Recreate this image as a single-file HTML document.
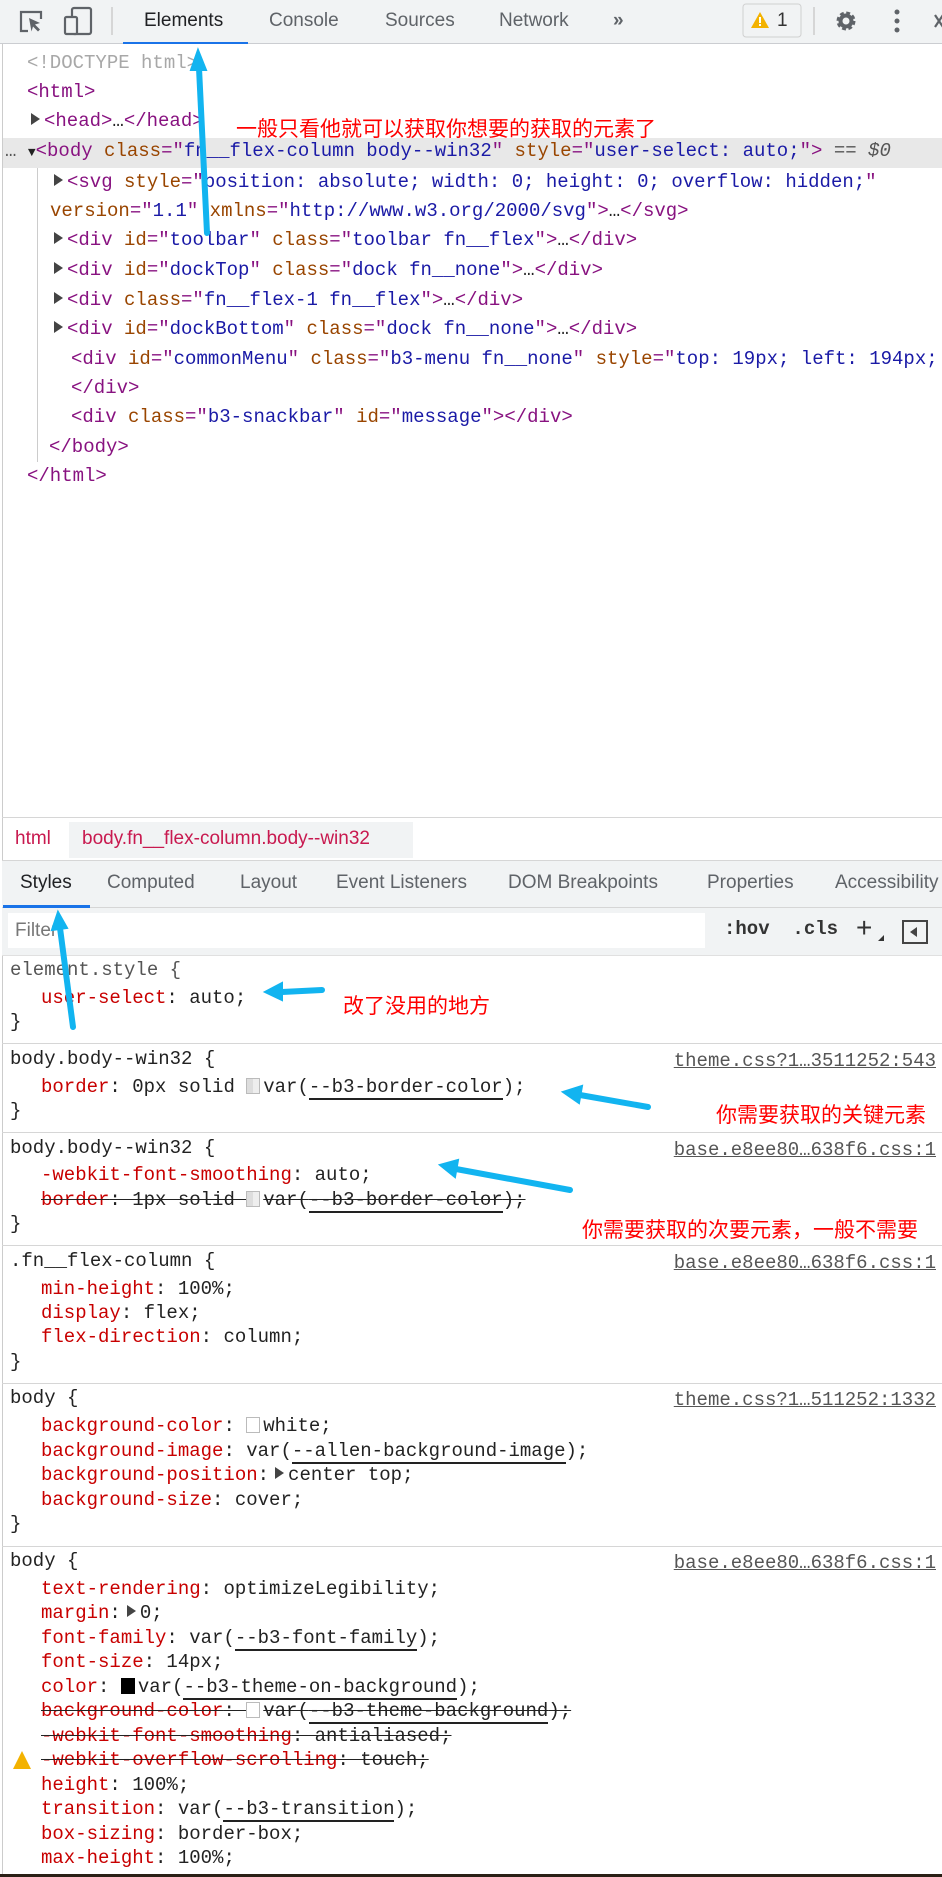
<!DOCTYPE html>
<html><head><meta charset="utf-8"><style>
*{margin:0;padding:0;box-sizing:border-box}
body{width:942px;height:1877px;position:relative;background:#fff;overflow:hidden;font-family:"Liberation Sans",sans-serif}
.l{position:absolute;height:26px;line-height:26px;white-space:pre;font:19px "Liberation Mono",monospace;color:#222}
.t{color:#881280}.a{color:#994500}.v{color:#1a1aa6}.g{color:#a8a8a8}
.p{color:#c80000}.u{border-bottom:2px solid #222}
.s{text-decoration:line-through;text-decoration-color:#222}
.lk{position:absolute;right:6px;font:19px "Liberation Mono",monospace;color:#555;text-decoration:underline;height:26px;line-height:26px}
.sw{display:inline-block;width:14px;height:16px;border:1px solid #bbb;vertical-align:-2px;margin-right:3px;background:linear-gradient(90deg,#ddd 50%,#eee 50%)}
.tri{display:inline-block;width:0;height:0;border-left:9px solid #444;border-top:6px solid transparent;border-bottom:6px solid transparent;margin-right:4px;vertical-align:1px}
.sep{position:absolute;left:2px;right:0;height:1px;background:#d6d6d6}
.cn{position:absolute;color:#f00;font:21px "Liberation Sans","Noto Sans CJK SC",sans-serif;white-space:nowrap}
.tab{position:absolute;top:10px;font-size:19px;color:#5f6368}
.st{position:absolute;top:872px;font-size:19px;color:#5f6368}
</style></head><body>
<div style="position:absolute;left:0;top:0;width:942px;height:44px;background:#f1f3f4;border-bottom:1px solid #cbcdd1"></div>
<svg style="position:absolute;left:0;top:0" width="942" height="44">
<path d="M28 31h-7V12h20v7" fill="none" stroke="#5f6368" stroke-width="2.2"/>
<path d="M29 18l11 5-5 1.5 5 5-2 2-5-5-1.5 5z" fill="#5f6368"/>
<rect x="72" y="8" width="19" height="26" rx="2" fill="none" stroke="#5f6368" stroke-width="2.2"/>
<rect x="65" y="17" width="12" height="17" rx="1.5" fill="#f1f3f4" stroke="#5f6368" stroke-width="2.2"/>
<line x1="112" y1="7" x2="112" y2="35" stroke="#ccc" stroke-width="1.5"/>
<rect x="123" y="42" width="125" height="3" fill="#1a73e8"/>
<rect x="743" y="4" width="58" height="33" rx="3" fill="#f1f3f4" stroke="#d0d0d0"/>
<path d="M760 12l-9 16h18z" fill="#f3b200"/><rect x="759" y="17" width="2" height="6" fill="#fff"/><rect x="759" y="24" width="2" height="2" fill="#fff"/>
<line x1="814" y1="7" x2="814" y2="35" stroke="#ccc" stroke-width="1.5"/>
<circle cx="846" cy="21" r="7" fill="none" stroke="#5f6368" stroke-width="5" stroke-dasharray="3.3 2.2"/>
<circle cx="846" cy="21" r="5.5" fill="none" stroke="#5f6368" stroke-width="4"/>
<circle cx="897" cy="12" r="2.5" fill="#5f6368"/><circle cx="897" cy="21" r="2.5" fill="#5f6368"/><circle cx="897" cy="30" r="2.5" fill="#5f6368"/>
<path d="M935 15l8 12M943 15l-8 12" stroke="#5f6368" stroke-width="2.2"/>
</svg>
<div class="tab" style="left:144px;color:#202124">Elements</div>
<div class="tab" style="left:269px">Console</div>
<div class="tab" style="left:385px">Sources</div>
<div class="tab" style="left:499px">Network</div>
<div class="tab" style="left:613px;font-weight:bold">»</div>
<div class="tab" style="left:777px;color:#333">1</div>
<div style="position:absolute;left:2px;top:44px;width:1px;height:1833px;background:#ccc"></div>

<div style="position:absolute;left:3px;top:138px;width:939px;height:30px;background:#e8e8e8"></div>
<div style="position:absolute;left:37px;top:168px;width:1px;height:294px;background:#ccc"></div>
<div class="l g" style="left:27px;top:52px">&lt;!DOCTYPE html&gt;</div>
<div class="l t" style="left:27px;top:81px">&lt;html&gt;</div>
<div class="l" style="left:31px;top:110px"><span class="tri"></span><span class="t">&lt;head&gt;</span>…<span class="t">&lt;/head&gt;</span></div>
<div class="l" style="left:5px;top:140px"><span style="color:#555">…</span> <span style="font-size:13px">▼</span><span class="t">&lt;body</span> <span class="a">class</span><span class="t">="</span><span class="v">fn__flex-column body--win32</span><span class="t">"</span> <span class="a">style</span><span class="t">="</span><span class="v">user-select: auto;</span><span class="t">"&gt;</span> <span style="color:#555">== <i>$0</i></span></div>
<div class="l" style="left:54px;top:171px"><span class="tri"></span><span class="t">&lt;svg</span> <span class="a">style</span><span class="t">="</span><span class="v">position: absolute; width: 0; height: 0; overflow: hidden;</span><span class="t">"</span></div>
<div class="l" style="left:50px;top:200px"><span class="a">version</span><span class="t">="</span><span class="v">1.1</span><span class="t">"</span> <span class="a">xmlns</span><span class="t">="</span><span class="v">http://www.w3.org/2000/svg</span><span class="t">"&gt;</span>…<span class="t">&lt;/svg&gt;</span></div>
<div class="l" style="left:54px;top:229px"><span class="tri"></span><span class="t">&lt;div</span> <span class="a">id</span><span class="t">="</span><span class="v">toolbar</span><span class="t">"</span> <span class="a">class</span><span class="t">="</span><span class="v">toolbar fn__flex</span><span class="t">"&gt;</span>…<span class="t">&lt;/div&gt;</span></div>
<div class="l" style="left:54px;top:259px"><span class="tri"></span><span class="t">&lt;div</span> <span class="a">id</span><span class="t">="</span><span class="v">dockTop</span><span class="t">"</span> <span class="a">class</span><span class="t">="</span><span class="v">dock fn__none</span><span class="t">"&gt;</span>…<span class="t">&lt;/div&gt;</span></div>
<div class="l" style="left:54px;top:289px"><span class="tri"></span><span class="t">&lt;div</span> <span class="a">class</span><span class="t">="</span><span class="v">fn__flex-1 fn__flex</span><span class="t">"&gt;</span>…<span class="t">&lt;/div&gt;</span></div>
<div class="l" style="left:54px;top:318px"><span class="tri"></span><span class="t">&lt;div</span> <span class="a">id</span><span class="t">="</span><span class="v">dockBottom</span><span class="t">"</span> <span class="a">class</span><span class="t">="</span><span class="v">dock fn__none</span><span class="t">"&gt;</span>…<span class="t">&lt;/div&gt;</span></div>
<div class="l" style="left:71px;top:348px"><span class="t">&lt;div</span> <span class="a">id</span><span class="t">="</span><span class="v">commonMenu</span><span class="t">"</span> <span class="a">class</span><span class="t">="</span><span class="v">b3-menu fn__none</span><span class="t">"</span> <span class="a">style</span><span class="t">="</span><span class="v">top: 19px; left: 194px;</span></div>
<div class="l t" style="left:71px;top:377px">&lt;/div&gt;</div>
<div class="l" style="left:71px;top:406px"><span class="t">&lt;div</span> <span class="a">class</span><span class="t">="</span><span class="v">b3-snackbar</span><span class="t">"</span> <span class="a">id</span><span class="t">="</span><span class="v">message</span><span class="t">"&gt;&lt;/div&gt;</span></div>
<div class="l t" style="left:49px;top:436px">&lt;/body&gt;</div>
<div class="l t" style="left:27px;top:465px">&lt;/html&gt;</div>
<div class="cn" style="left:236px;top:113px">一般只看他就可以获取你想要的获取的元素了</div>

<div class="sep" style="top:817px"></div>
<div style="position:absolute;left:69px;top:822px;width:344px;height:36px;background:#f1f3f4"></div>
<div style="position:absolute;left:15px;top:828px;font-size:19px;color:#c8194f">html</div>
<div style="position:absolute;left:82px;top:828px;font-size:19px;color:#c8194f">body.fn__flex-column.body--win32</div>
<div style="position:absolute;left:2px;top:860px;width:940px;height:95px;background:#f1f3f4;border-top:1px solid #d6d6d6"></div>
<div style="position:absolute;left:2px;top:907px;width:940px;height:1px;background:#d6d6d6"></div>
<div class="st" style="left:20px;color:#202124">Styles</div>
<div class="st" style="left:107px">Computed</div>
<div class="st" style="left:240px">Layout</div>
<div class="st" style="left:336px">Event Listeners</div>
<div class="st" style="left:508px">DOM Breakpoints</div>
<div class="st" style="left:707px">Properties</div>
<div class="st" style="left:835px">Accessibility</div>
<div style="position:absolute;left:3px;top:905px;width:87px;height:3px;background:#1a73e8"></div>
<div style="position:absolute;left:8px;top:913px;width:697px;height:35px;background:#fff"></div>
<div style="position:absolute;left:15px;top:920px;font-size:19px;color:#777">Filter</div>
<div class="l" style="left:724px;top:918px;font-weight:bold;color:#333">:hov  .cls</div>
<div style="position:absolute;left:856px;top:912px;font-size:28px;color:#333">+</div>
<div style="position:absolute;left:878px;top:935px;border-left:6px solid transparent;border-bottom:6px solid #333"></div>
<div style="position:absolute;left:902px;top:920px;width:26px;height:24px;border:2px solid #444"><div style="position:absolute;left:6px;top:5px;border-right:7px solid #444;border-top:5px solid transparent;border-bottom:5px solid transparent"></div></div>
<div style="position:absolute;left:2px;top:955px;width:940px;height:1px;background:#e0e0e0"></div>

<div class="l" style="left:10px;top:959px;color:#555">element.style {</div>
<div class="l" style="left:41px;top:987px"><span class="p">user-select</span>: auto;</div>
<div class="l" style="left:10px;top:1011px">}</div>
<div class="cn" style="left:343px;top:990px">改了没用的地方</div>
<div class="sep" style="top:1043px"></div>

<div class="l" style="left:10px;top:1048px">body.body--win32 {</div><div class="lk" style="top:1048px">theme.css?1…3511252:543</div>
<div class="l" style="left:41px;top:1076px"><span class="p">border</span>: 0px solid <span class="sw"></span>var(<span class="u">--b3-border-color</span>);</div>
<div class="l" style="left:10px;top:1100px">}</div>
<div class="cn" style="left:716px;top:1099px">你需要获取的关键元素</div>
<div class="sep" style="top:1132px"></div>

<div class="l" style="left:10px;top:1137px">body.body--win32 {</div><div class="lk" style="top:1137px">base.e8ee80…638f6.css:1</div>
<div class="l" style="left:41px;top:1164px"><span class="p">-webkit-font-smoothing</span>: auto;</div>
<div class="l s" style="left:41px;top:1189px"><span class="p">border</span>: 1px solid <span class="sw"></span>var(<span class="u">--b3-border-color</span>);</div>
<div class="l" style="left:10px;top:1213px">}</div>
<div class="cn" style="left:582px;top:1214px">你需要获取的次要元素，一般不需要</div>
<div class="sep" style="top:1245px"></div>

<div class="l" style="left:10px;top:1250px">.fn__flex-column {</div><div class="lk" style="top:1250px">base.e8ee80…638f6.css:1</div>
<div class="l" style="left:41px;top:1278px"><span class="p">min-height</span>: 100%;</div>
<div class="l" style="left:41px;top:1302px"><span class="p">display</span>: flex;</div>
<div class="l" style="left:41px;top:1326px"><span class="p">flex-direction</span>: column;</div>
<div class="l" style="left:10px;top:1351px">}</div>
<div class="sep" style="top:1383px"></div>

<div class="l" style="left:10px;top:1387px">body {</div><div class="lk" style="top:1387px">theme.css?1…511252:1332</div>
<div class="l" style="left:41px;top:1415px"><span class="p">background-color</span>: <span class="sw" style="background:#fff"></span>white;</div>
<div class="l" style="left:41px;top:1440px"><span class="p">background-image</span>: var(<span class="u">--allen-background-image</span>);</div>
<div class="l" style="left:41px;top:1464px"><span class="p">background-position</span>:<span class="tri" style="margin-left:6px"></span>center top;</div>
<div class="l" style="left:41px;top:1489px"><span class="p">background-size</span>: cover;</div>
<div class="l" style="left:10px;top:1513px">}</div>
<div class="sep" style="top:1546px"></div>

<div class="l" style="left:10px;top:1550px">body {</div><div class="lk" style="top:1550px">base.e8ee80…638f6.css:1</div>
<div class="l" style="left:41px;top:1578px"><span class="p">text-rendering</span>: optimizeLegibility;</div>
<div class="l" style="left:41px;top:1602px"><span class="p">margin</span>:<span class="tri" style="margin-left:6px"></span>0;</div>
<div class="l" style="left:41px;top:1627px"><span class="p">font-family</span>: var(<span class="u">--b3-font-family</span>);</div>
<div class="l" style="left:41px;top:1651px"><span class="p">font-size</span>: 14px;</div>
<div class="l" style="left:41px;top:1676px"><span class="p">color</span>: <span class="sw" style="background:#000;border-color:#000"></span>var(<span class="u">--b3-theme-on-background</span>);</div>
<div class="l s" style="left:41px;top:1700px"><span class="p">background-color</span>: <span class="sw" style="background:#fff"></span>var(<span class="u">--b3-theme-background</span>);</div>
<div class="l s" style="left:41px;top:1725px"><span class="p">-webkit-font-smoothing</span>: antialiased;</div>
<div style="position:absolute;left:13px;top:1751px;border-left:9px solid transparent;border-right:9px solid transparent;border-bottom:18px solid #f3b200"></div>
<div class="l s" style="left:41px;top:1749px"><span class="p">-webkit-overflow-scrolling</span>: touch;</div>
<div class="l" style="left:41px;top:1774px"><span class="p">height</span>: 100%;</div>
<div class="l" style="left:41px;top:1798px"><span class="p">transition</span>: var(<span class="u">--b3-transition</span>);</div>
<div class="l" style="left:41px;top:1823px"><span class="p">box-sizing</span>: border-box;</div>
<div class="l" style="left:41px;top:1847px"><span class="p">max-height</span>: 100%;</div>
<div style="position:absolute;left:0;top:1874px;width:942px;height:3px;background:#2a2016"></div>

<svg style="position:absolute;left:0;top:0" width="942" height="1877">
<g stroke="#12b4f0" stroke-width="6" stroke-linecap="round" fill="#12b4f0">
<line x1="207" y1="233" x2="199" y2="68"/><polygon points="191,70 198,50 206,70" stroke-width="2"/>
<line x1="73" y1="1027" x2="60" y2="928"/><polygon points="52,930 58,912 67,928" stroke-width="2"/>
<line x1="322" y1="990" x2="282" y2="992"/><polygon points="282,983 265,992 282,1000" stroke-width="2"/>
<line x1="648" y1="1107" x2="580" y2="1095"/><polygon points="582,1086 563,1092 579,1103" stroke-width="2"/>
<line x1="570" y1="1190" x2="456" y2="1169"/><polygon points="458,1160 440,1165 455,1177" stroke-width="2"/>
</g></svg>
</body></html>
